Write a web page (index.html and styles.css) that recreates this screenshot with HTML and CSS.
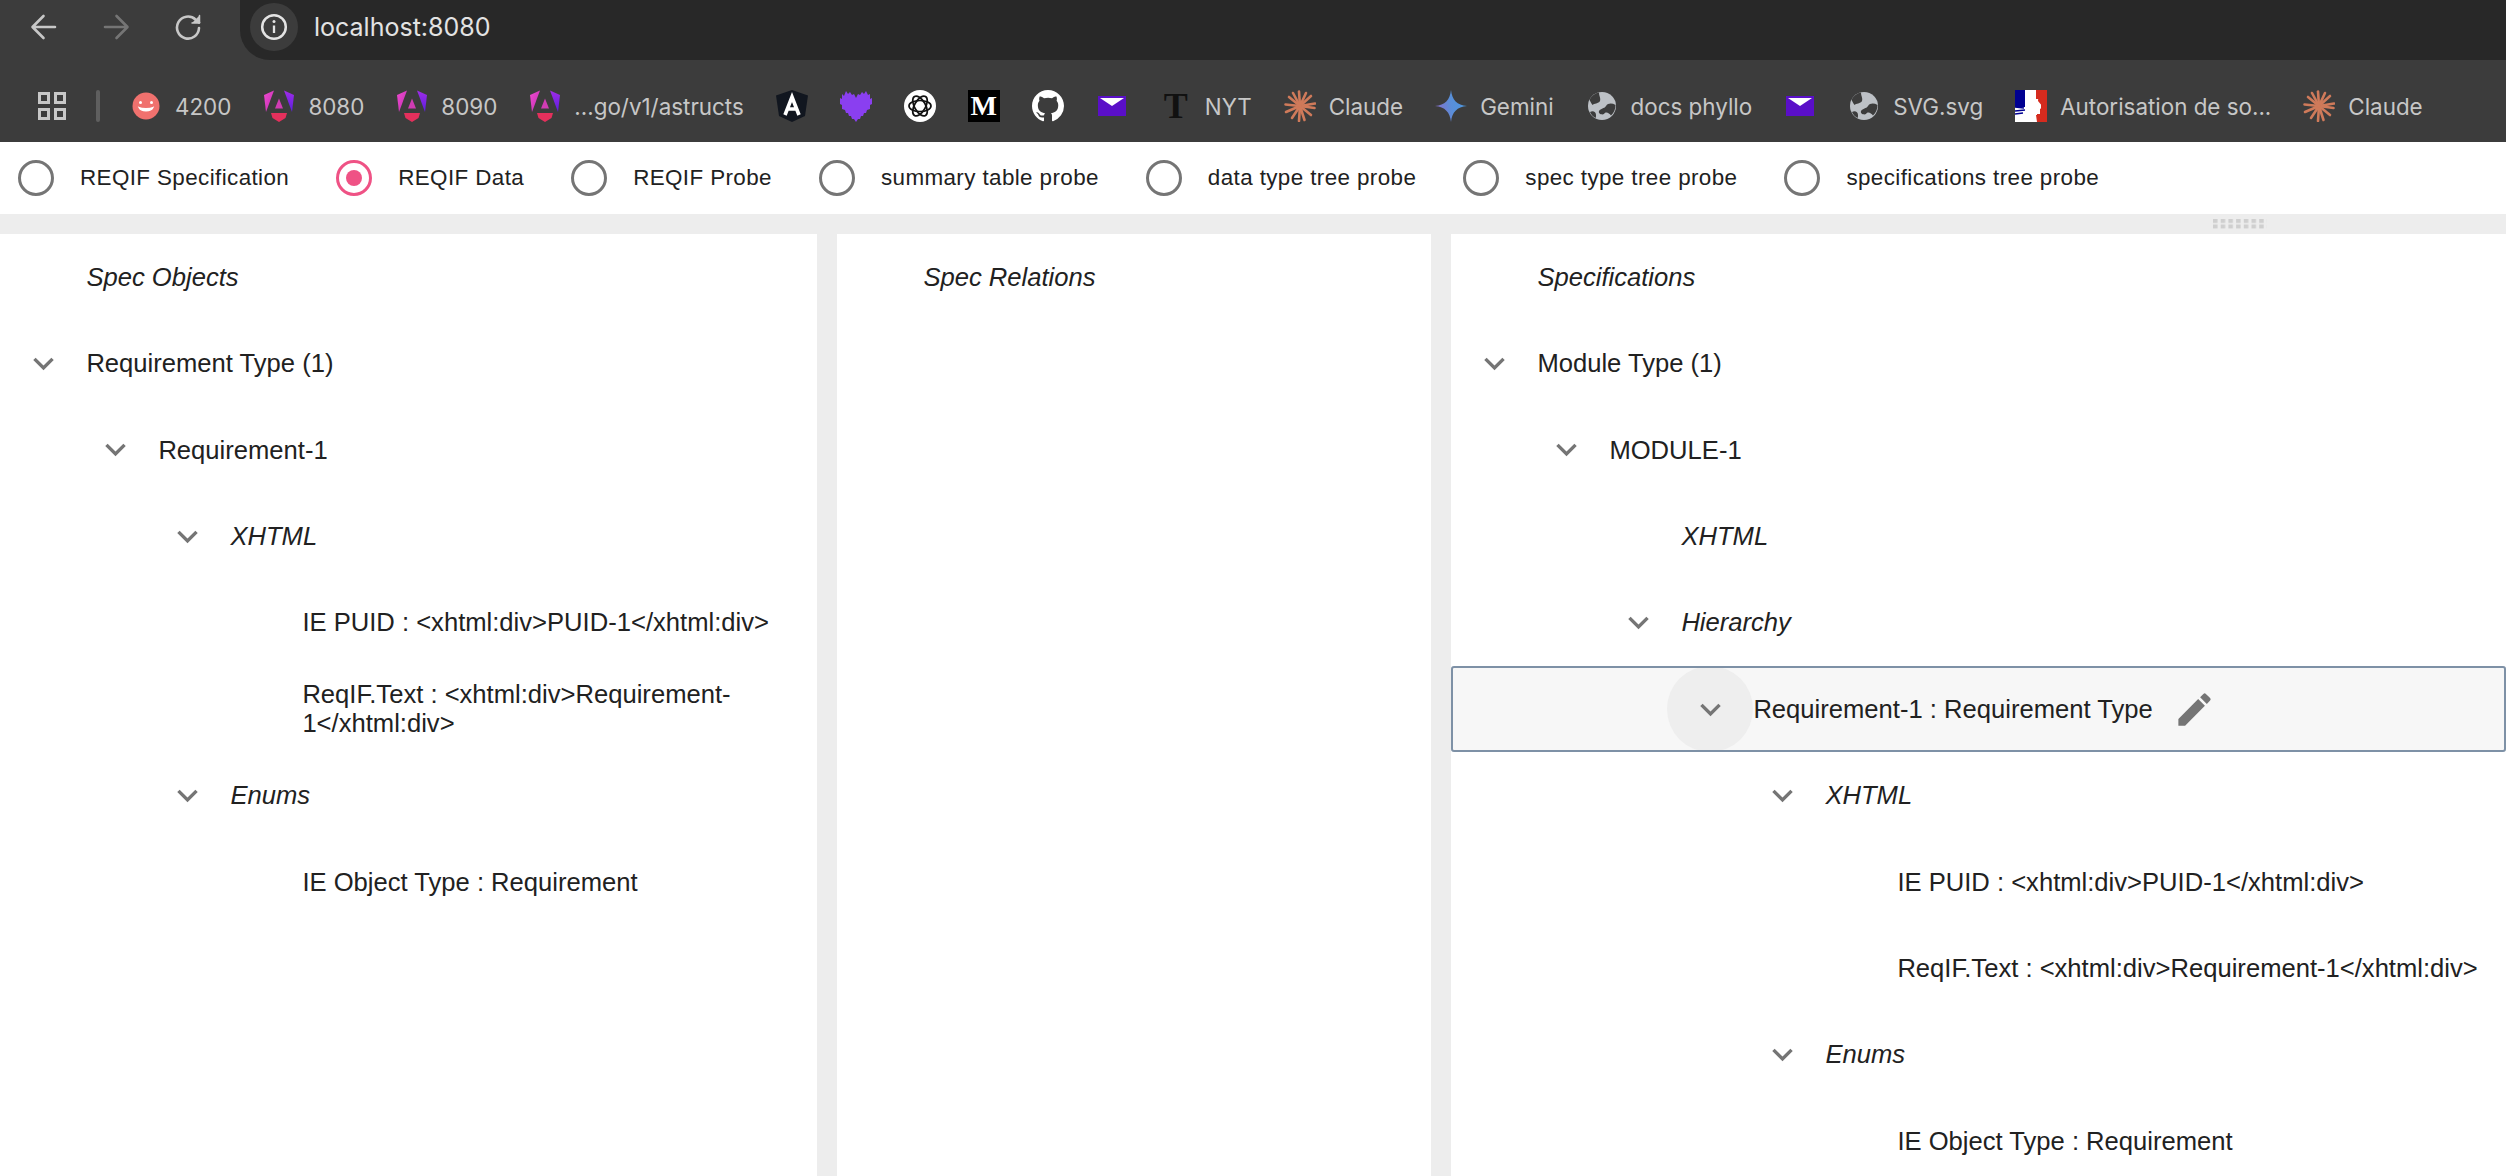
FILE: index.html
```html
<!DOCTYPE html>
<html lang="en">
<head>
  <meta charset="UTF-8">
  <title>localhost:8080</title>
  <link rel="stylesheet" href="styles.css">
</head>
<body>

  <svg class="defs" width="0" height="0">
    <defs>
      <linearGradient id="ngPink" x1="0" y1="0" x2="1" y2="1">
        <stop offset="0" stop-color="#f04ad0"/>
        <stop offset="1" stop-color="#c02fb0"/>
      </linearGradient>
      <linearGradient id="ngPurple" x1="0" y1="0" x2="0" y2="1">
        <stop offset="0" stop-color="#a02ce8"/>
        <stop offset="1" stop-color="#5a1ee0"/>
      </linearGradient>
      <linearGradient id="gemini" x1="0" y1="0.6" x2="1" y2="0.4">
        <stop offset="0" stop-color="#8a6cc8"/>
        <stop offset="0.5" stop-color="#5a8ed8"/>
        <stop offset="1" stop-color="#4a98e0"/>
      </linearGradient>
      <symbol id="i-angular" viewBox="0 0 32 32">
        <path d="M11 0.5 L1 5 L3 22 Z" fill="url(#ngPink)"/>
        <path d="M21 0.5 L31 5 L29 22 Z" fill="url(#ngPurple)"/>
        <path d="M16 8.5 L20 18.5 H12 Z" fill="#d03cb4"/>
        <path d="M8 23 H24 L22.5 28 L16 32 L9.5 28 Z" fill="#e4305c"/>
      </symbol>
      <symbol id="i-mail" viewBox="0 0 32 32">
        <rect x="2" y="6" width="28" height="20" fill="#5a0fc8"/>
        <path d="M4 8 H28 L16 16 Z" fill="#fff"/>
      </symbol>
      <symbol id="i-globe" viewBox="0 0 32 32">
        <circle cx="16" cy="16" r="14" fill="#bdc1c6"/>
        <path d="M13 2.5 C13 6 15 8 14 11 C12.5 14 8 13 6.5 15 C5 13 4 11 3.5 9.5 C6 5.5 9 3 13 2.5 Z" fill="#3c3c3c"/>
        <path d="M29.5 15 C26 13 22 13 20 16 C18 19 15 18 13 21 C12 24 16 25 18 24 C20 21 23 23 25 25.500 C28 22.500 29.500 19 29.500 15 Z" fill="#3c3c3c"/>
        <path d="M4 22 C7 20 10 22 10 25 C10 26.500 10 27 9.500 28 C7 26.500 5 24.500 4 22 Z" fill="#3c3c3c"/>
      </symbol>
      <symbol id="i-claude" viewBox="0 0 32 32">
        <g stroke="#cf7a5a" stroke-width="2.600" stroke-linecap="round">
          <path d="M16 16 L15 1.500"/>
          <path d="M16 16 L22 3"/>
          <path d="M16 16 L27 6"/>
          <path d="M16 16 L31 13.500"/>
          <path d="M16 16 L30.500 18"/>
          <path d="M16 16 L27 25"/>
          <path d="M16 16 L20.500 30"/>
          <path d="M16 16 L15 31"/>
          <path d="M16 16 L8 28"/>
          <path d="M16 16 L2 22"/>
          <path d="M16 16 L1.500 14.500"/>
          <path d="M16 16 L5 7"/>
          <path d="M16 16 L9 3"/>
        </g>
      </symbol>
      <symbol id="i-chevron" viewBox="0 0 24 24">
        <path d="M16.59 8.59L12 13.17 7.41 8.59 6 10l6 6 6-6z"/>
      </symbol>
    </defs>
  </svg>

  <header class="toolbar">
    <svg class="nav-icon" viewBox="0 0 28 28" fill="none" stroke="#c7c7c7" stroke-width="2.600" stroke-linecap="round" stroke-linejoin="round"><path d="M25 14 H3 M13.500 3 L2.500 14 L13.500 25"/></svg>
    <svg class="nav-icon" viewBox="0 0 28 28" fill="none" stroke="#757575" stroke-width="2.600" stroke-linecap="round" stroke-linejoin="round"><path d="M3 14 H25 M14.500 3 L25.500 14 L14.500 25"/></svg>
    <svg class="nav-icon" viewBox="0 0 28 28" fill="none" stroke="#c7c7c7" stroke-width="2.600" stroke-linecap="round" stroke-linejoin="round"><path d="M25 15 A11 11 0 1 1 21.500 6.500 L25 9.500"/><path d="M25.500 2.500 V10 H18" fill="#c7c7c7" stroke-width="1.500"/></svg>
    <div class="address">
      <span class="chip">
        <svg width="28" height="28" viewBox="0 0 28 28" fill="none" stroke="#e3e3e3" stroke-width="2.500"><circle cx="14" cy="14" r="11.800"/><path d="M14 12.500 V20" stroke-width="2.300"/><circle cx="14" cy="8.500" r="1.500" fill="#e3e3e3" stroke="none"/></svg>
      </span>
      <span class="url">localhost:8080</span>
    </div>
  </header>

  <nav class="bookmarks">
    <svg class="apps" viewBox="0 0 28 28" fill="none" stroke="#c7c7c7" stroke-width="3"><rect x="1.500" y="1.500" width="9" height="9"/><rect x="17.500" y="1.500" width="9" height="9"/><rect x="1.500" y="17.500" width="9" height="9"/><rect x="17.500" y="17.500" width="9" height="9"/></svg>
    <span class="sep"></span>
    <a class="bm">
      <svg class="bm-icon" viewBox="0 0 32 32"><circle cx="16" cy="16" r="13.500" fill="#f0716e"/><circle cx="10.500" cy="12.500" r="1.500" fill="#fff"/><circle cx="21.500" cy="12.500" r="1.500" fill="#fff"/><path d="M9 17.500 C11 22 21 22 23 17.500 C20 19 12 19 9 17.500 Z" fill="#fff" stroke="#fff" stroke-width="1.200"/></svg>
      4200
    </a>
    <a class="bm"><svg class="bm-icon"><use href="#i-angular"/></svg>8080</a>
    <a class="bm"><svg class="bm-icon"><use href="#i-angular"/></svg>8090</a>
    <a class="bm"><svg class="bm-icon"><use href="#i-angular"/></svg>...go/v1/astructs</a>
    <a class="bm">
      <svg class="bm-icon" viewBox="0 0 32 32"><path d="M16 0 L32 5.500 L29 26 L16 32 L3 26 L0 5.500 Z" fill="#11161f"/><path d="M9 25 L16 7 L23 25 M11.500 19 H20.500" fill="none" stroke="#fff" stroke-width="3.600"/></svg>
    </a>
    <a class="bm">
      <svg class="bm-icon" viewBox="0 0 32 32"><path d="M0 8 L2 9 L2 4 L4 6 L6 1 L8 4 L10 2 L12 5 L14 4 L16 8 L18 4 L20 5 L22 2 L24 4 L26 1 L28 5 L30 4 L30 9 L32 8 L32 14 L30 15 L30 19 L27 20 L26 23 L24 23 L23 26 L21 26 L20 29 L18 29 L16 32 L14 29 L12 29 L11 26 L9 26 L8 23 L6 23 L5 20 L2 19 L2 15 L0 14 Z" fill="#8a3ff0"/></svg>
    </a>
    <a class="bm">
      <svg class="bm-icon" viewBox="0 0 32 32"><circle cx="16" cy="16" r="16" fill="#fff"/><g fill="none" stroke="#111" stroke-width="1.700"><ellipse cx="16" cy="16" rx="11" ry="5.500"/><ellipse cx="16" cy="16" rx="11" ry="5.500" transform="rotate(60 16 16)"/><ellipse cx="16" cy="16" rx="11" ry="5.500" transform="rotate(120 16 16)"/></g></svg>
    </a>
    <a class="bm"><span class="letter-m">M</span></a>
    <a class="bm">
      <svg class="bm-icon" viewBox="0 0 16 16"><path fill="#fff" d="M8 0C3.58 0 0 3.58 0 8c0 3.54 2.29 6.53 5.47 7.59.4.07.55-.17.55-.38 0-.19-.01-.82-.01-1.49-2.01.37-2.53-.49-2.69-.94-.09-.23-.48-.94-.82-1.13-.28-.15-.68-.52-.01-.53.63-.01 1.08.58 1.23.82.72 1.21 1.87.87 2.33.66.07-.52.28-.87.51-1.07-1.78-.2-3.64-.89-3.64-3.95 0-.87.31-1.59.82-2.15-.08-.2-.36-1.02.08-2.12 0 0 .67-.21 2.2.82.64-.18 1.32-.27 2-.27.68 0 1.36.09 2 .27 1.53-1.04 2.2-.82 2.2-.82.44 1.1.16 1.92.08 2.12.51.56.82 1.27.82 2.15 0 3.07-1.87 3.75-3.65 3.95.29.25.54.73.54 1.48 0 1.07-.01 1.93-.01 2.2 0 .21.15.46.55.38A8.013 8.013 0 0016 8c0-4.42-3.58-8-8-8z"/></svg>
    </a>
    <a class="bm"><svg class="bm-icon"><use href="#i-mail"/></svg></a>
    <a class="bm"><span class="letter-t">T</span>NYT</a>
    <a class="bm"><svg class="bm-icon"><use href="#i-claude"/></svg>Claude</a>
    <a class="bm">
      <svg class="bm-icon" viewBox="0 0 32 32"><path d="M16 0 C17 10 22 15 32 16 C22 17 17 22 16 32 C15 22 10 17 0 16 C10 15 15 10 16 0 Z" fill="url(#gemini)"/></svg>
      Gemini
    </a>
    <a class="bm"><svg class="bm-icon"><use href="#i-globe"/></svg>docs phyllo</a>
    <a class="bm"><svg class="bm-icon"><use href="#i-mail"/></svg></a>
    <a class="bm"><svg class="bm-icon"><use href="#i-globe"/></svg>SVG.svg</a>
    <a class="bm">
      <svg class="bm-icon" viewBox="0 0 32 32"><rect width="32" height="32" fill="#fff"/><rect width="10" height="17" fill="#000091"/><rect x="26" width="6" height="32" fill="#d52b1e"/><rect x="22" y="24" width="4" height="8" fill="#d52b1e"/><rect x="21" width="5" height="9" fill="#d52b1e"/><path d="M23 11 L28 17 L25 19 L25 25 L21 25 L22 32 L32 32 L32 0 L24 0 Z" fill="#d52b1e"/><path d="M0 17 L9 18 M0 21 L10 20 M0 24 L8 23" stroke="#000091" stroke-width="1.300"/></svg>
      Autorisation de so...
    </a>
    <a class="bm"><svg class="bm-icon"><use href="#i-claude"/></svg>Claude</a>
  </nav>

  <div class="modes">
    <label class="mode"><span class="radio"></span>REQIF Specification</label>
    <label class="mode"><span class="radio on"></span>REQIF Data</label>
    <label class="mode"><span class="radio"></span>REQIF Probe</label>
    <label class="mode"><span class="radio"></span>summary table probe</label>
    <label class="mode"><span class="radio"></span>data type tree probe</label>
    <label class="mode"><span class="radio"></span>spec type tree probe</label>
    <label class="mode"><span class="radio"></span>specifications tree probe</label>
  </div>

  <div class="split-h">
    <svg class="grip" width="54" height="10"><defs><pattern id="dots" width="7.700" height="5.500" patternUnits="userSpaceOnUse"><rect width="4.500" height="4" fill="#cfcfcf"/></pattern></defs><rect width="54" height="10" fill="url(#dots)"/></svg>
  </div>

  <main class="panels">
    <section class="panel panel-objects">
      <div class="row"><span class="toggle"></span><span class="label em">Spec Objects</span></div>
      <div class="row"><span class="toggle"><svg class="chev"><use href="#i-chevron"/></svg></span><span class="label">Requirement Type (1)</span></div>
      <div class="row lvl-1"><span class="toggle"><svg class="chev"><use href="#i-chevron"/></svg></span><span class="label">Requirement-1</span></div>
      <div class="row lvl-2"><span class="toggle"><svg class="chev"><use href="#i-chevron"/></svg></span><span class="label em">XHTML</span></div>
      <div class="row lvl-3"><span class="toggle"></span><span class="label">IE PUID : &lt;xhtml:div&gt;PUID-1&lt;/xhtml:div&gt;</span></div>
      <div class="row lvl-3"><span class="toggle"></span><span class="label">ReqIF.Text : &lt;xhtml:div&gt;Requirement-1&lt;/xhtml:div&gt;</span></div>
      <div class="row lvl-2"><span class="toggle"><svg class="chev"><use href="#i-chevron"/></svg></span><span class="label em">Enums</span></div>
      <div class="row lvl-3"><span class="toggle"></span><span class="label">IE Object Type : Requirement</span></div>
    </section>

    <section class="panel panel-relations">
      <div class="row"><span class="toggle"></span><span class="label em">Spec Relations</span></div>
    </section>

    <section class="panel panel-specs">
      <div class="row"><span class="toggle"></span><span class="label em">Specifications</span></div>
      <div class="row"><span class="toggle"><svg class="chev"><use href="#i-chevron"/></svg></span><span class="label">Module Type (1)</span></div>
      <div class="row lvl-1"><span class="toggle"><svg class="chev"><use href="#i-chevron"/></svg></span><span class="label">MODULE-1</span></div>
      <div class="row lvl-2"><span class="toggle"></span><span class="label em">XHTML</span></div>
      <div class="row lvl-2"><span class="toggle"><svg class="chev"><use href="#i-chevron"/></svg></span><span class="label em">Hierarchy</span></div>
      <div class="row lvl-3 selected">
        <span class="toggle hovered"><svg class="chev"><use href="#i-chevron"/></svg></span>
        <span class="label">Requirement-1 : Requirement Type</span>
        <svg class="edit" viewBox="0 0 24 24"><path d="M3 17.25V21h3.75L17.81 9.94l-3.75-3.75L3 17.25zM20.71 7.04a.996.996 0 000-1.41l-2.34-2.34a.996.996 0 00-1.41 0l-1.83 1.83 3.75 3.75 1.83-1.83z"/></svg>
      </div>
      <div class="row lvl-4"><span class="toggle"><svg class="chev"><use href="#i-chevron"/></svg></span><span class="label em">XHTML</span></div>
      <div class="row lvl-5"><span class="toggle"></span><span class="label">IE PUID : &lt;xhtml:div&gt;PUID-1&lt;/xhtml:div&gt;</span></div>
      <div class="row lvl-5"><span class="toggle"></span><span class="label">ReqIF.Text : &lt;xhtml:div&gt;Requirement-1&lt;/xhtml:div&gt;</span></div>
      <div class="row lvl-4"><span class="toggle"><svg class="chev"><use href="#i-chevron"/></svg></span><span class="label em">Enums</span></div>
      <div class="row lvl-5"><span class="toggle"></span><span class="label">IE Object Type : Requirement</span></div>
    </section>
  </main>

</body>
</html>
```

FILE: styles.css
```css
html, body {
  margin: 0;
  height: 100%;
  overflow: hidden;
}

body {
  display: flex;
  flex-direction: column;
  font-family: "Liberation Sans", Arial, sans-serif;
  background: #fff;
  color: #212121;
}

.defs {
  position: absolute;
}

/* browser chrome */
.toolbar {
  display: flex;
  align-items: flex-start;
  height: 70px;
  padding-left: 30px;
  box-sizing: border-box;
  background: #3c3c3c;
}

.nav-icon {
  width: 28px;
  height: 28px;
  margin-top: 13px;
  margin-right: 44px;
  flex: none;
}

.address {
  flex: 1;
  display: flex;
  align-items: center;
  height: 60px;
  margin-left: -6px;
  padding: 0 0 6px 10px;
  box-sizing: border-box;
  background: #282828;
  border-bottom-left-radius: 30px;
}

.chip {
  display: flex;
  align-items: center;
  justify-content: center;
  width: 48px;
  height: 48px;
  border-radius: 50%;
  background: #3c3c3c;
}

.url {
  margin-left: 16px;
  font-family: Inter, sans-serif;
  font-size: 25px;
  color: #e3e3e3;
}

.bookmarks {
  display: flex;
  align-items: center;
  gap: 32px;
  height: 72px;
  padding-left: 38px;
  background: #3c3c3c;
  overflow: hidden;
  white-space: nowrap;
}

.apps {
  width: 28px;
  height: 28px;
  flex: none;
}

.sep {
  width: 4px;
  height: 32px;
  margin: 0 -2px;
  border-radius: 2px;
  background: #5f5f5f;
}

.bm {
  display: flex;
  align-items: center;
  gap: 13px;
  flex: none;
  font-family: Inter, sans-serif;
  font-size: 22.4px;
  color: #c7c7c7;
}

.bm-icon {
  width: 32px;
  height: 32px;
  flex: none;
}

.letter-m {
  width: 32px;
  height: 32px;
  background: #000;
  color: #fff;
  font-family: "Liberation Serif", serif;
  font-weight: bold;
  font-size: 28px;
  line-height: 32px;
  text-align: center;
}

.letter-t {
  width: 32px;
  height: 32px;
  color: #111;
  font-family: "Liberation Serif", serif;
  font-weight: bold;
  font-size: 36px;
  line-height: 32px;
  text-align: center;
}

/* radio row */
.modes {
  display: flex;
  align-items: center;
  gap: 47px;
  height: 72px;
  padding-left: 18px;
  font-size: 22.4px;
  letter-spacing: 0.4px;
}

.mode {
  display: flex;
  align-items: center;
  gap: 26px;
}

.radio {
  position: relative;
  width: 36px;
  height: 36px;
  box-sizing: border-box;
  border: 3.2px solid #757575;
  border-radius: 50%;
  flex: none;
}

.radio.on {
  border-color: #ef5285;
}

.radio.on::after {
  content: "";
  position: absolute;
  top: 6.8px;
  left: 6.8px;
  width: 16px;
  height: 16px;
  border-radius: 50%;
  background: #ef5285;
}

.split-h {
  display: flex;
  justify-content: flex-end;
  align-items: flex-start;
  height: 20px;
  padding: 5px 239px 0 0;
  box-sizing: border-box;
  background: #ededed;
}

/* tree panels */
.panels {
  flex: 1;
  display: flex;
  gap: 20px;
  min-height: 0;
  background: #ededed;
}

.panel {
  background: #fff;
  overflow: hidden;
  font-size: 25.6px;
}

.panel-objects {
  width: 817px;
}

.panel-relations {
  width: 594px;
}

.panel-specs {
  flex: 1;
}

.row {
  display: flex;
  align-items: center;
  box-sizing: border-box;
  height: 86.4px;
  line-height: 28.8px;
}

.lvl-1 { padding-left: 72px; }
.lvl-2 { padding-left: 144px; }
.lvl-3 { padding-left: 216px; }
.lvl-4 { padding-left: 288px; }
.lvl-5 { padding-left: 360px; }

.toggle {
  display: flex;
  align-items: center;
  justify-content: center;
  width: 86.4px;
  height: 86.4px;
  flex: none;
  border-radius: 50%;
}

.toggle.hovered {
  background: #eee;
}

.chev {
  width: 41px;
  height: 41px;
  fill: #757575;
}

.em {
  font-style: italic;
}

.selected {
  background: #f7f7f7;
  outline: 2.500px solid #7e91a6;
  outline-offset: -2px;
  border-radius: 3px;
}

.edit {
  width: 43px;
  height: 43px;
  margin-left: 20px;
  fill: #757575;
}
```
